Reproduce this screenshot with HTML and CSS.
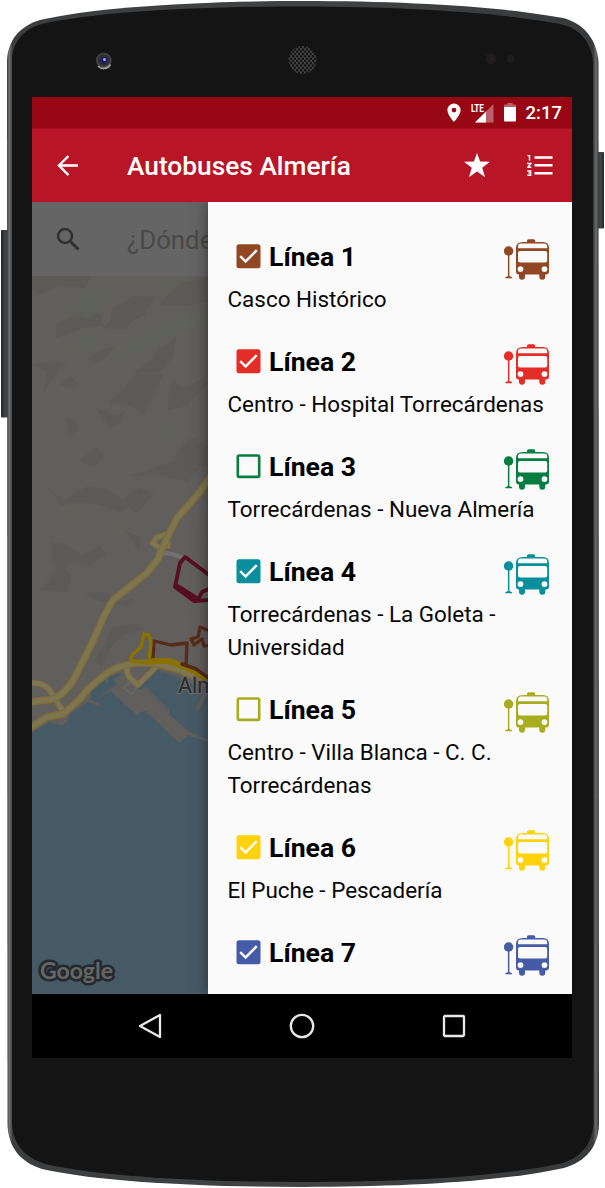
FILE: index.html
```
<!DOCTYPE html>
<html lang="es">
<head>
<meta charset="utf-8">
<title>Autobuses Almería</title>
<link rel="stylesheet" href="styles.css">
</head>
<body>
<svg class="defs" width="0" height="0" aria-hidden="true">
  <symbol id="bus" viewBox="0 0 46 42">
    <circle cx="4.6" cy="12" r="4.7"/>
    <path d="M3.9 12h1.5v26.4H3.9zM1.300 39.300v-1l2.200-1h2.400l2.200 1v1z"/>
    <path fill-rule="evenodd" d="M19 3h4V1.800q0-1.600 1.600-1.600h5q1.600 0 1.600 1.600V3h7.800q6 0 6 6v23.500q0 3-3 3h-.7v2.200a2.600 2.600 0 0 1-6 0v-2.200H21v2.200a2.600 2.600 0 0 1-6 0v-2.200q-3-.2-3-3V9q0-6 7-6zM17 4.600q-3 0-3 3v1.700h29.200V7.600q0-3-3-3zM16 12q-2 0-2 2v7.500q0 2 2 2h25.200q2 0 2-2V14q0-2-2-2zM16.500 27.200a2.900 2.900 0 1 0 0 5.800 2.900 2.900 0 0 0 0-5.800zM40.500 27.200a2.900 2.900 0 1 0 0 5.800 2.900 2.900 0 0 0 0-5.800z"/>
  </symbol>
  <symbol id="on" viewBox="0 0 25 25">
    <rect x=".5" y=".2" width="24" height="24" rx="2.500"/>
    <path d="M4.200 12.200l5.400 5.300L20.800 6.200" fill="none" stroke="#fafafa" stroke-width="2.500"/>
  </symbol>
  <symbol id="off" viewBox="0 0 25 25">
    <rect x="1.800" y="1.500" width="21.400" height="21.400" rx="1.200" fill="none" stroke="currentColor" stroke-width="2.600"/>
  </symbol>
</svg>

<div class="phone">
  <svg class="shell" viewBox="0 0 605 1188">
    <defs>
      <linearGradient id="rim" x1="0" x2="1" y1="0" y2="0">
        <stop offset="0" stop-color="#3a3b3c"/><stop offset=".004" stop-color="#707172"/><stop offset=".009" stop-color="#3c3d3e"/>
        <stop offset=".5" stop-color="#414243"/>
        <stop offset=".99" stop-color="#38393b"/><stop offset=".995" stop-color="#6b6c6e"/><stop offset="1" stop-color="#333"/>
      </linearGradient>
      <linearGradient id="key" x1="0" x2="1" y1="0" y2="0"><stop offset="0" stop-color="#242526"/><stop offset=".6" stop-color="#454749"/><stop offset="1" stop-color="#242526"/></linearGradient>
      <pattern id="mesh" width="4" height="4.600" patternUnits="userSpaceOnUse">
        <rect width="4" height="4.600" fill="#454545"/><circle cx="1" cy="1.150" r="1.250" fill="#101010"/><circle cx="3" cy="3.450" r="1.250" fill="#101010"/>
      </pattern>
    </defs>
    <rect x="1" y="230" width="8" height="187.500" rx="1" fill="url(#key)"/>
    <rect x="595" y="152" width="9" height="76.500" rx="1" fill="url(#key)"/>
    <path fill="url(#rim)" d="M7 60C8 40 20 26 40 20C90 8 190 1 302 1C410 1 505 7 563 18C583 23 597 39 598.500 62L599 1125C598 1146 587 1161 564 1168C500 1182 400 1187 303 1187C205 1187 100 1182 42 1169C20 1162 8 1147 7.500 1124z"/>
    <path fill="#141414" d="M12 60C12 43 23 29 42 24C95 12 195 6.500 302 6.500C408 6.500 502 13 560 24C580 28 592 43 593 63L593.500 1124C592 1143 583 1156 563 1163C500 1177 400 1182 303 1182C205 1182 103 1177 45 1164C24 1157 12.500 1144 12 1122z"/>
    <circle cx="103.800" cy="60.500" r="7.800" fill="#444446"/><path d="M98 66a7.800 7.800 0 0 0 12.500-1.500" stroke="#99999a" stroke-width="1.800" fill="none"/><circle cx="103.800" cy="60" r="6" fill="#303034"/><circle cx="103.800" cy="60.300" r="3.500" fill="#211d69"/><circle cx="104.500" cy="59.500" r="1.500" fill="#a9a7da"/>
    <circle cx="302.500" cy="60" r="14" fill="url(#mesh)"/>
    <circle cx="491" cy="58.500" r="5.500" fill="#1d1b1b"/><circle cx="492" cy="59" r="1.800" fill="#2c1f20"/><circle cx="510.500" cy="59" r="4" fill="#1e1c1c"/>
  </svg>

  <main class="screen">
    <div class="status">
      <svg width="14" height="20" viewBox="0 0 14 20"><path fill="#fff" fill-rule="evenodd" d="M7 .5a6.600 6.600 0 0 0-6.600 6.600C.4 12 7 19 7 19s6.600-7 6.600-11.900A6.600 6.600 0 0 0 7 .5zm0 4.200a2.400 2.400 0 1 1 0 4.800 2.400 2.400 0 0 1 0-4.800z"/></svg>
      <span class="signal">
        <span class="lte">LTE</span>
        <svg width="19" height="19" viewBox="0 0 19 19"><path d="M18.500 0v18.500H0z" fill="#b9606a"/><path d="M11 7.500v11H0z" fill="#fff"/></svg>
      </span>
      <svg class="battery" width="12" height="19" viewBox="0 0 12 19"><path d="M0 2.500q0-1 1-1h2.500V0h5v1.500H11q1 0 1 1V5H0z" fill="#b9606a"/><path d="M0 4h12v13.500q0 1-1 1H1q-1 0-1-1z" fill="#fff"/></svg>
      <span class="clock">2:17</span>
    </div>
    <header class="appbar">
      <svg class="back" width="22" height="22" viewBox="0 0 22 22"><path d="M11.500 1L1.900 10.500l9.600 9.700M1.900 10.500H21" fill="none" stroke="#fff" stroke-width="2.400"/></svg>
      <h1 class="title">Autobuses Almería</h1>
      <svg class="star" width="26" height="25" viewBox="0 0 26 25"><path fill="#fff" d="M13 0l3.100 8.600 9.900.1-7.800 6.100 2.900 9.400-8.100-5.600-8.100 5.600 2.900-9.400L0 8.700l9.900-.1z"/></svg>
      <svg class="numbered" width="26" height="22" viewBox="0 0 26 22"><g fill="none" stroke="#fff"><path d="M7.500 2.500H25.500M7.500 10.300H25.500M7.500 18.200H25.500" stroke-width="2.500"/><path d="M.5.600h2v4.800M.3 8.400h3.500L.9 12.300h3.500M.3 16h3.300v4.300H.3M1.500 18.100h2" stroke-width="1.500"/></g></svg>
    </header>

    <div class="content">
      <section class="behind">
        <div class="search">
          <svg width="24" height="24" viewBox="0 0 24 24"><circle cx="9" cy="9" r="7" fill="none" stroke="#303030" stroke-width="2.500"/><path d="M14 14l8.500 8.500" stroke="#303030" stroke-width="3"/></svg>
          <span class="hint">¿Dónde vas?</span>
        </div>
        <svg class="map" viewBox="32 276 176 718">
          <defs><linearGradient id="urban" x1="0" y1="0" x2="1" y2="1"><stop offset=".4" stop-color="#605f5b"/><stop offset="1" stop-color="#625d60"/></linearGradient></defs>
          <rect x="32" y="276" width="176" height="718" fill="url(#urban)"/>
          <g fill="#5b5a57" opacity=".75">
            <path d="M32 276h58l-4 12-28-2-16 8-10-4zM111 310l22-14 22 1-10 17-12 7-8 8-22-1 8-8zM158 306l18-22 32-6v24l-24 4zM56 325l24-14 20 3 4 12-20 2-28 10zM88 358l14-8 14-5-8 10-14 10zM32 364l35-2-12 12-12 20 4-22zM60 385l10-9 9 8-4 4zM110 400l14-10 5-10 8-6h26l-10 24-10 16-12-8-22-2zM150 360l8-10 18-12-4 20-12 14-28 2zM168 400l5-20 10 8 20-10 5 6-22 22-18 4zM96 408l22 8 8-6-6 12-10 6zM66 417l10 3 2 10-10 8zM80 460l16-14 8 10-10 12zM175 455l16-18 17 10v20l-32-4zM46 486l18 14 24-14 20 4 18 12 18-6-24 16-24-8-20-2-14 4zM122 500l18-12 14 6-18 20zM130 476l48-16 22 8-12 14-24-6zM50 542l16 2 16 12 18-10 6 8-18 12-18-4-8 12-8-10zM58 566l14 8-4 18-26-2zM86 592h20l16 10 12-4-6 8-24-4-14-4zM125 530l16 8-2 14zM112 628l20-4 12 6-20 4-12 12-10 20-8-6 12-18z"/>
          </g>
          <g fill="#5e6259" opacity=".6"><path d="M90 290l10-5 8 15-20 20-20-8zM75 345l10-14 12 14-20 6zM116 355l24-20 22-8 20-10 26-4v10l-40 12-30 14-18 14zM162 286l16-8 4 6-14 10zM166 424l8 2-2 16-12-6zM70 510l12-4-8 12zM115 530l10-10-4 14z"/></g>
          <path fill="#465a66" d="M30 733L50 722L62 726L68 721L70 714L88 702L98 706L101 705L90 699L92 689L105 680L107 685L109 677L121 673L127 678L130 684L138 688L158 670L180 678L208 692V994H30z"/>
          <path fill="#605f5c" d="M99 698l12-10 6-4-4-5 9-5 17 16 7-3 23 23v4l20 18 20 8-1 2-20-7-9 8-33-32-6 1-3 4-26-25-12 7z"/>
          <g fill="none" stroke-linejoin="round" stroke-linecap="round">
            <path d="M124 688l6-6 7 6-6 6z" stroke="#6a6967" stroke-width="1.200"/>
            <path d="M208 688l-10 20" stroke="#625e5c" stroke-width="4"/>
            <path d="M163 553q10 0 20 5" stroke="#737271" stroke-width="4"/>
            <path d="M162 550L153 543L156 538L166 534L168 546M30 683Q47 682 52 694L63 711M130 664Q124 670 130 678L138 685L157 666" stroke="#806e3d" stroke-width="6"/>
            <path d="M162 550L153 543L156 538L166 534L168 546M30 683Q47 682 52 694L63 711M130 664Q124 670 130 678L138 685L157 666" stroke="#7b7757" stroke-width="3.500"/>
            <path d="M212 474L200 492L177 518L168 536L158 559L147 573L113 600L104 616L92 643L74 679Q60 701 46 700L30 702M30 728L47 717L63 714L79 700L88 689L107 673Q128 660 157 664L180 670L208 683" stroke="#806c38" stroke-width="7.500"/>
            <path d="M212 474L200 492L177 518L168 536L158 559L147 573L113 600L104 616L92 643L74 679Q60 701 46 700L30 702M30 728L47 717L63 714L79 700L88 689L107 673Q128 660 157 664L180 670L208 683" stroke="#7c7750" stroke-width="4.600"/>
            <path d="M209 575L185 557L180 563L175 587L194 601L209 600M198 600L202 592L209 589M178 586L200 600" stroke="#570d25" stroke-width="3.800"/>
            <path d="M210 631L200 627L198 637L191 639L194 645L202 639L204 646L210 645M153 659L154 641L171 645L187 643L186 667" stroke="#562c19" stroke-width="3.300"/>
            <path d="M154 661L170 661L190 669L210 681" stroke="#8c7000" stroke-width="6"/>
            <path d="M182 664L196 669L210 679" stroke="#512a18" stroke-width="3.500"/>
            <path d="M131 661L132 655L141 647L144 634L149 635L151 643L149 659L153 663L131 661" stroke="#877300" stroke-width="3.500"/>
          </g>
          <text class="city" x="178" y="693">Almería</text>
          <text class="brand" x="40" y="979" textLength="73" lengthAdjust="spacingAndGlyphs">Google</text>
        </svg>
      </section>

      <aside class="drawer">
        <article class="line brown"><div class="head"><svg class="box"><use href="#on"/></svg><h2>Línea 1</h2><svg class="bus"><use href="#bus"/></svg></div><p>Casco Histórico</p></article>
        <article class="line red"><div class="head"><svg class="box"><use href="#on"/></svg><h2>Línea 2</h2><svg class="bus"><use href="#bus"/></svg></div><p>Centro - Hospital Torrecárdenas</p></article>
        <article class="line green"><div class="head"><svg class="box"><use href="#off"/></svg><h2>Línea 3</h2><svg class="bus"><use href="#bus"/></svg></div><p>Torrecárdenas - Nueva Almería</p></article>
        <article class="line teal"><div class="head"><svg class="box"><use href="#on"/></svg><h2>Línea 4</h2><svg class="bus"><use href="#bus"/></svg></div><p>Torrecárdenas - La Goleta -<br>Universidad</p></article>
        <article class="line olive"><div class="head"><svg class="box"><use href="#off"/></svg><h2>Línea 5</h2><svg class="bus"><use href="#bus"/></svg></div><p>Centro - Villa Blanca - C. C.<br>Torrecárdenas</p></article>
        <article class="line yellow"><div class="head"><svg class="box"><use href="#on"/></svg><h2>Línea 6</h2><svg class="bus"><use href="#bus"/></svg></div><p>El Puche - Pescadería</p></article>
        <article class="line blue"><div class="head"><svg class="box"><use href="#on"/></svg><h2>Línea 7</h2><svg class="bus"><use href="#bus"/></svg></div></article>
      </aside>
    </div>

    <nav class="navbar">
      <svg viewBox="0 0 26 26"><path d="M23 2v22L3 13z"/></svg>
      <svg viewBox="0 0 26 26"><circle cx="13" cy="13" r="11.200"/></svg>
      <svg viewBox="0 0 26 26"><rect x="3" y="3" width="20" height="20" rx="1"/></svg>
    </nav>
  </main>
</div>
</body>
</html>
```
FILE: styles.css
```
* { box-sizing: border-box; }
body { margin: 0; background: #fff; font-family: Roboto, "Liberation Sans", sans-serif; }
h1, h2, p { margin: 0; }
svg { display: block; flex: none; }
.defs { position: absolute; }
.phone { position: relative; width: 605px; height: 1188px; padding: 97px 33px 130px 32px; overflow: hidden; }
.shell { position: absolute; inset: 0; width: 605px; height: 1188px; }
.screen { position: relative; display: flex; flex-direction: column; width: 540px; height: 961px; background: #000; }

.status { display: flex; align-items: center; justify-content: flex-end; height: 31px; padding-right: 10px; background: #970714; color: #fff; }
.signal { display: flex; margin-left: 9px; width: 24px; height: 20px; align-items: flex-end; justify-content: flex-end; position: relative; }
.lte { position: absolute; left: 1px; top: 0; font-size: 11.500px; line-height: 11px; font-weight: 700; letter-spacing: -.3px; transform: scaleX(.72); transform-origin: left; }
.battery { margin-left: 10px; }
.clock { margin-left: 10px; padding-top: 1px; font-size: 18.500px; font-weight: 500; line-height: 30px; }

.appbar { display: flex; align-items: center; height: 74px; padding: 0 19px 0 25px; background: #b81526; border-top: 1px solid #a71020; color: #fff; }
.title { flex: 1; margin-left: 48px; font-size: 26.300px; font-weight: 500; line-height: 36px; white-space: nowrap; }
.numbered { margin-left: 37px; }

.content { display: flex; height: 792px; overflow: hidden; }
.behind { display: flex; flex-direction: column; width: 176px; overflow: hidden; }
.search { display: flex; align-items: center; height: 74px; padding-left: 24px; background: #656565; white-space: nowrap; }
.hint { margin-left: 47px; padding-top: 2px; font-size: 25.800px; color: #494949; }
.map { width: 176px; height: 718px; }
.city { font-size: 21.500px; fill: #292e31; stroke: #686866; stroke-width: 2.500px; paint-order: stroke; }
.brand { font-family: Lato, sans-serif; font-size: 22px; font-weight: 700; fill: #666; stroke: #23292d; stroke-width: 5px; stroke-linejoin: round; paint-order: stroke; }

.drawer { position: relative; width: 364px; padding: 37px 22px 0 20px; background: #fafafa; box-shadow: 0 0 14px rgba(0, 0, 0, .5); color: #080808; }
.line { padding-bottom: 28px; }
.head { display: flex; height: 44px; padding-left: 8px; align-items: flex-start; fill: currentColor; }
.box { width: 25px; height: 25px; margin-top: 5px; }
h2 { flex: 1; margin-left: 8px; font-size: 26.600px; line-height: 36px; font-weight: 700; color: #000; }
.bus { width: 46px; height: 42px; }
.line p { margin-left: -.5px; font-size: 22.450px; line-height: 33px; color: #080808; white-space: nowrap; }
.brown { color: #914721; }
.red { color: #e52d27; }
.green { color: #087d40; }
.teal { color: #088f9b; }
.olive { color: #a8ad20; }
.yellow { color: #ffd20c; }
.blue { color: #465ba8; }

.navbar { display: flex; flex: 1; align-items: center; justify-content: center; gap: 126px; padding-bottom: 1px; }
.navbar svg { width: 26px; height: 26px; fill: none; stroke: #e9e9e9; stroke-width: 2.300; stroke-linejoin: round; }
```
